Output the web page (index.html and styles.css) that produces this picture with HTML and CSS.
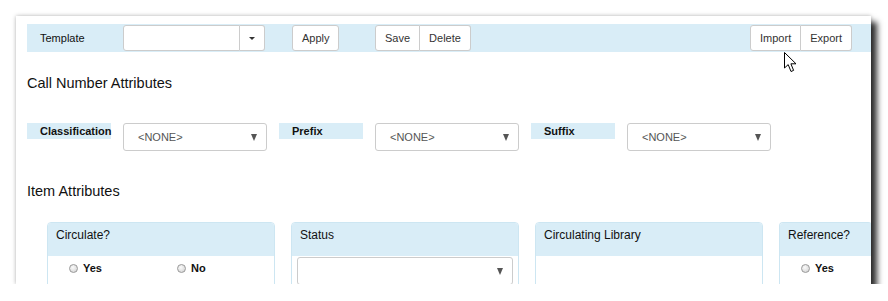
FILE: index.html
```html
<!DOCTYPE html>
<html lang="en">
<head>
  <meta charset="UTF-8">
  <title>Item Attribute Editor</title>
  <link rel="stylesheet" href="styles.css">
</head>
<body>
  <div class="window">
    <!-- Template toolbar -->
    <div class="toolbar">
      <span class="toolbar-label">Template</span>
      <div class="combo">
        <span class="combo-input"></span>
        <span class="combo-caret"><i class="caret-sm"></i></span>
      </div>
      <button class="btn btn-apply">Apply</button>
      <div class="btn-group btn-group-save">
        <button class="btn">Save</button>
        <button class="btn">Delete</button>
      </div>
      <div class="btn-group btn-group-right">
        <button class="btn">Import</button>
        <button class="btn">Export</button>
      </div>
    </div>

    <h2 class="section-title">Call Number Attributes</h2>
    <div class="attr-row">
      <span class="attr-label">Classification</span>
      <div class="select"><span>&lt;NONE&gt;</span><i class="caret"></i></div>
      <span class="attr-label">Prefix</span>
      <div class="select"><span>&lt;NONE&gt;</span><i class="caret"></i></div>
      <span class="attr-label">Suffix</span>
      <div class="select"><span>&lt;NONE&gt;</span><i class="caret"></i></div>
    </div>

    <h2 class="section-title section-title-items">Item Attributes</h2>
    <div class="panel-row">
      <div class="panel">
        <div class="panel-heading">Circulate?</div>
        <div class="panel-body radios">
          <label class="radio"><span class="radio-dot"></span>Yes</label>
          <label class="radio"><span class="radio-dot"></span>No</label>
        </div>
      </div>
      <div class="panel">
        <div class="panel-heading">Status</div>
        <div class="panel-body panel-body-select">
          <div class="select select-wide"><span></span><i class="caret"></i></div>
        </div>
      </div>
      <div class="panel">
        <div class="panel-heading">Circulating Library</div>
        <div class="panel-body"></div>
      </div>
      <div class="panel panel-last">
        <div class="panel-heading">Reference?</div>
        <div class="panel-body radios">
          <label class="radio"><span class="radio-dot"></span>Yes</label>
        </div>
      </div>
    </div>
  </div>

  <!-- mouse pointer -->
  <svg class="pointer" width="14" height="21" viewBox="0 0 14 21">
    <path d="M0.5 0.5 L0.5 16 L4.2 12.6 L7 19.5 L9.6 18.4 L6.9 11.8 L12 11.8 Z" fill="#fff" stroke="#000" stroke-width="1" stroke-linejoin="round"/>
  </svg>
</body>
</html>
```

FILE: styles.css
```css
body {
  margin: 0;
  background: #fff;
  font-family: "Liberation Sans", Arial, sans-serif;
  color: #222;
}
.window {
  box-sizing: border-box;
  width: 855px;
  height: 268px;
  margin: 16px 0 0 16px;
  padding: 8px 0 0 11px;
  background: #fff;
  overflow: hidden;
  box-shadow: 0 0 4px rgba(0, 0, 0, 0.3), 6px 6px 6px rgba(0, 0, 0, 0.8);
}
.toolbar {
  display: flex;
  align-items: center;
  height: 28px;
  background: #d9edf7;
  padding-right: 19px;
}
.toolbar-label {
  width: 83px;
  padding-left: 13px;
  font-size: 11px;
  color: #111;
}
.combo {
  display: flex;
  height: 26px;
  width: 142px;
}
.combo-input {
  box-sizing: border-box;
  width: 117px;
  background: #fff;
  border: 1px solid #ccc;
  border-radius: 3px 0 0 3px;
}
.combo-caret {
  box-sizing: border-box;
  width: 25px;
  background: #fff;
  border: 1px solid #ccc;
  border-left: none;
  border-radius: 0 3px 3px 0;
  display: flex;
  align-items: center;
  justify-content: center;
}
.caret-sm {
  border-left: 3px solid transparent;
  border-right: 3px solid transparent;
  border-top: 3px solid #333;
}
.btn {
  height: 26px;
  padding: 0 9px;
  background: #fff;
  border: 1px solid #ccc;
  border-radius: 3px;
  font-family: inherit;
  font-size: 11px;
  color: #333;
}
.btn-apply {
  margin-left: 27px;
  width: 47px;
}
.btn-group {
  display: flex;
}
.btn-group .btn:first-child {
  border-radius: 3px 0 0 3px;
}
.btn-group .btn:last-child {
  border-radius: 0 3px 3px 0;
  border-left: none;
}
.btn-group-save {
  margin-left: 36px;
}
.btn-group-right {
  margin-left: auto;
}
.section-title {
  margin: 22px 0 0;
  font-size: 14.5px;
  line-height: 18px;
  font-weight: normal;
  color: #111;
}
.attr-row {
  display: flex;
  align-items: flex-start;
  margin-top: 31px;
}
.attr-label {
  box-sizing: border-box;
  width: 84px;
  height: 16px;
  padding-left: 13px;
  background: #d9edf7;
  font-size: 11px;
  line-height: 16px;
  font-weight: bold;
  color: #111;
  white-space: nowrap;
}
.select {
  box-sizing: border-box;
  display: flex;
  align-items: center;
  justify-content: space-between;
  width: 144px;
  height: 28px;
  margin: 0 12px;
  padding: 0 9px 0 14px;
  background: #fff;
  border: 1px solid #ccc;
  border-radius: 3px;
  font-size: 11px;
  color: #555;
}
.caret {
  border-left: 3.5px solid transparent;
  border-right: 3.5px solid transparent;
  border-top: 7px solid #555;
}
.section-title-items {
  margin-top: 31px;
}
.panel-row {
  display: flex;
  margin: 22px 0 0 20px;
}
.panel {
  flex-shrink: 0;
  box-sizing: border-box;
  width: 228px;
  height: 80px;
  margin-right: 16px;
  border: 1px solid #cde6f2;
  border-radius: 4px 4px 0 0;
}
.panel-last {
  width: 93px;
  border-right: none;
  margin-right: 0;
}
.panel-heading {
  height: 33px;
  padding: 5px 0 0 8px;
  box-sizing: border-box;
  background: #d9edf7;
  border-radius: 3px 3px 0 0;
  font-size: 12px;
  color: #111;
}
.panel-last .panel-heading {
  border-radius: 3px 0 0 0;
}
.radios {
  display: grid;
  grid-template-columns: 108px 108px;
  padding: 6px 0 0 21px;
}
.radio {
  display: flex;
  align-items: center;
  font-size: 11px;
  font-weight: bold;
  color: #111;
}
.radio-dot {
  box-sizing: border-box;
  width: 9px;
  height: 9px;
  margin-right: 5px;
  border: 1px solid #999;
  border-radius: 50%;
  background: radial-gradient(circle at 40% 35%, #fafafa, #cfcfcf);
}
.panel-body-select {
  padding: 1px 5px 0;
}
.select-wide {
  width: 216px;
  margin: 0;
}
.pointer {
  position: absolute;
  left: 784px;
  top: 52px;
}
```
